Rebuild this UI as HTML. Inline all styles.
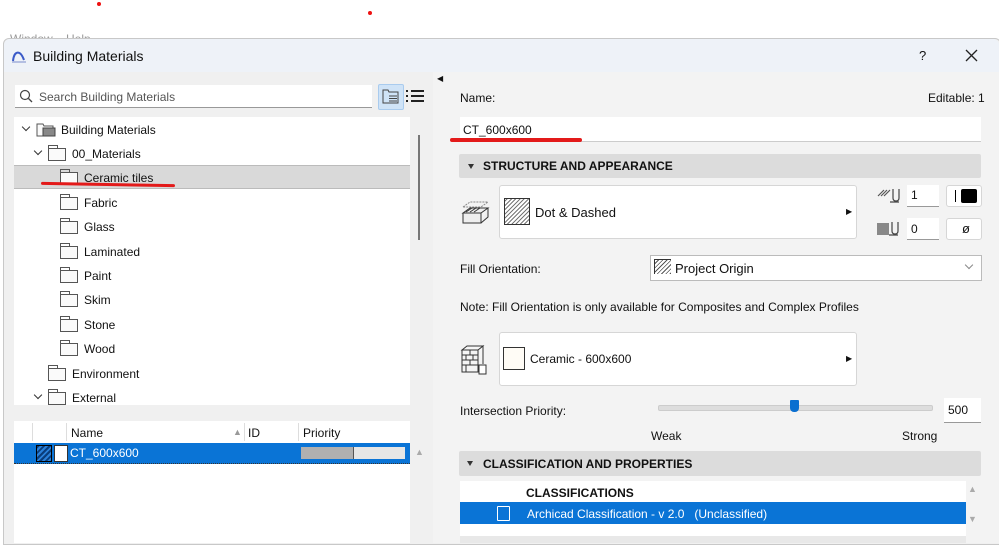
<!DOCTYPE html>
<html><head><style>
body{margin:0;width:999px;height:543px;overflow:hidden;background:#fff;font-family:"Liberation Sans",sans-serif;font-size:12px;color:#111;position:relative}
.a{position:absolute}
.fold{position:absolute;width:18px;height:13px;border:1px solid #555;background:#fafafa;box-sizing:border-box}
.fold:before{content:"";position:absolute;left:-1px;top:-4px;width:8px;height:3px;border:1px solid #555;border-bottom:none}
.t{position:absolute;font-size:12px}
.chev{position:absolute;width:5px;height:5px;border-right:1.3px solid #333;border-bottom:1.3px solid #333;transform:rotate(45deg)}
.btn{position:absolute;background:#fff;border:1px solid #d6d6d6;border-radius:3px}
.hdr{position:absolute;background:#dcdcdc;border-radius:2px;font-weight:bold;font-size:12px}
.tri{position:absolute;width:0;height:0;border-left:3.5px solid transparent;border-right:3.5px solid transparent;border-top:5px solid #333}
</style></head><body>
<div class="a" style="left:97px;top:2px;width:4px;height:4px;border-radius:2px;background:#e11"></div>
<div class="a" style="left:368px;top:11px;width:4px;height:4px;border-radius:2px;background:#e11"></div>
<div class="a" style="left:10px;top:32px;color:#999;font-size:12px">Window&nbsp;&nbsp;&nbsp;&nbsp;Help</div>
<div class="a" style="left:3px;top:38px;width:996px;height:505px;background:#f0f0f0;border:1px solid #c8c8c8;border-radius:6px 6px 0 0"></div>
<div class="a" style="left:4px;top:39px;width:995px;height:33px;background:#eef2f8;border-radius:6px 6px 0 0"></div>
<svg class="a" style="left:11px;top:47px" width="16" height="16"><path d="M2 14 C3 4 9 2 13 13" stroke="#3b5bc8" stroke-width="2" fill="none"/><path d="M1 15 H15" stroke="#7a8ccc"/></svg>
<div class="a" style="left:33px;top:48px;font-size:14px">Building Materials</div>
<div class="a" style="left:919px;top:48px;font-size:13px">?</div>
<svg class="a" style="left:965px;top:49px" width="13" height="13"><path d="M1 1L12 12M12 1L1 12" stroke="#222" stroke-width="1.3"/></svg>
<div class="a" style="left:433px;top:72px;width:566px;height:471px;background:#f3f3f3"></div>
<div class="a" style="left:437px;top:74px;font-size:8px">◀</div>
<div class="a" style="left:15px;top:85px;width:357px;height:22px;background:#fff;border-bottom:1px solid #999"></div>
<svg class="a" style="left:19px;top:89px" width="14" height="14"><circle cx="6" cy="6" r="4.5" stroke="#444" fill="none" stroke-width="1.2"/><path d="M9.5 9.5 L13 13" stroke="#444" stroke-width="1.3"/></svg>
<div class="a" style="left:39px;top:90px;color:#555">Search Building Materials</div>
<div class="a" style="left:378px;top:84px;width:24px;height:24px;background:#cfe3f7;border:1px solid #a9cbee;border-radius:2px"></div>
<svg class="a" style="left:382px;top:88px" width="18" height="16"><path d="M1 2h5l1 2h9v11H1z" fill="none" stroke="#444"/><path d="M7 8h8M7 10.5h8M7 13h8" stroke="#444"/></svg>
<svg class="a" style="left:405px;top:89px" width="20" height="14"><path d="M1 2h2M1 7h2M1 12h2M6 2h13M6 7h13M6 12h13" stroke="#222" stroke-width="2"/></svg>
<div class="a" style="left:14px;top:117px;width:396px;height:288px;background:#fff"></div>
<div class="a" style="left:418px;top:135px;width:2px;height:105px;background:#777"></div>
<div class="a" style="left:14px;top:165px;width:396px;height:24px;background:#d9d9d9;border-top:1px solid #bbb;border-bottom:1px solid #bbb;box-sizing:border-box"></div>
<div class="chev" style="left:23px;top:124px"></div>
<svg class="a" style="left:36px;top:121px" width="22" height="16"><path d="M1 3h6l1 2h9v10H1z" fill="#fafafa" stroke="#555"/><rect x="7" y="7" width="12" height="8" fill="#888" stroke="#444"/></svg>
<div class="t" style="left:61px;top:123px">Building Materials</div>
<div class="chev" style="left:35px;top:148px"></div>
<div class="fold" style="left:48px;top:148px"></div><div class="t" style="left:72px;top:147px">00_Materials</div>
<div class="fold" style="left:60px;top:172px"></div><div class="t" style="left:84px;top:171px">Ceramic tiles</div>
<div class="a" style="left:41px;top:183px;width:134px;height:3px;background:#e31a1a;border-radius:2px;transform:rotate(1deg)"></div>
<div class="fold" style="left:60px;top:197px"></div><div class="t" style="left:84px;top:196px">Fabric</div>
<div class="fold" style="left:60px;top:221px"></div><div class="t" style="left:84px;top:220px">Glass</div>
<div class="fold" style="left:60px;top:246px"></div><div class="t" style="left:84px;top:245px">Laminated</div>
<div class="fold" style="left:60px;top:270px"></div><div class="t" style="left:84px;top:269px">Paint</div>
<div class="fold" style="left:60px;top:294px"></div><div class="t" style="left:84px;top:293px">Skim</div>
<div class="fold" style="left:60px;top:319px"></div><div class="t" style="left:84px;top:318px">Stone</div>
<div class="fold" style="left:60px;top:343px"></div><div class="t" style="left:84px;top:342px">Wood</div>
<div class="fold" style="left:48px;top:368px"></div><div class="t" style="left:72px;top:367px">Environment</div>
<div class="chev" style="left:35px;top:392px"></div>
<div class="fold" style="left:48px;top:392px"></div><div class="t" style="left:72px;top:391px">External</div>
<div class="a" style="left:14px;top:421px;width:396px;height:122px;background:#fff"></div>
<div class="a" style="left:32px;top:423px;width:1px;height:18px;background:#ddd"></div>
<div class="a" style="left:66px;top:423px;width:1px;height:18px;background:#ddd"></div>
<div class="a" style="left:244px;top:423px;width:1px;height:18px;background:#ddd"></div>
<div class="a" style="left:298px;top:423px;width:1px;height:18px;background:#ddd"></div>
<div class="t" style="left:71px;top:426px">Name</div>
<div class="a" style="left:233px;top:427px;font-size:9px;color:#999">▲</div>
<div class="t" style="left:248px;top:426px">ID</div>
<div class="t" style="left:303px;top:426px">Priority</div>
<div class="a" style="left:14px;top:443px;width:396px;height:20px;background:#0a74d6;border-bottom:1px dotted #333"></div>
<div class="a" style="left:36px;top:445px;width:14px;height:15px;background:repeating-linear-gradient(135deg,#0a3d7a 0 2px,#2a80d8 2px 4px);border:1px solid #000"></div>
<div class="a" style="left:54px;top:445px;width:12px;height:15px;background:#fff;border:1px solid #333"></div>
<div class="t" style="left:70px;top:446px;color:#fff">CT_600x600</div>
<div class="a" style="left:301px;top:447px;width:52px;height:12px;background:#b0b0b0;border-right:1px solid #555"></div>
<div class="a" style="left:354px;top:447px;width:51px;height:12px;background:#e6e6e6"></div>
<div class="a" style="left:415px;top:447px;font-size:9px;color:#aaa">▲</div>
<div class="t" style="left:460px;top:91px">Name:</div>
<div class="t" style="left:928px;top:91px">Editable: 1</div>
<div class="a" style="left:460px;top:117px;width:521px;height:24px;background:#fff;border-bottom:1px solid #ccc"></div>
<div class="t" style="left:463px;top:123px">CT_600x600</div>
<div class="a" style="left:450px;top:138px;width:132px;height:4px;background:#e31a1a;border-radius:2px"></div>
<div class="hdr" style="left:459px;top:154px;width:522px;height:24px"><div class="tri" style="left:9px;top:10px"></div><span style="position:absolute;left:24px;top:5px">STRUCTURE AND APPEARANCE</span></div>
<svg class="a" style="left:460px;top:199px" width="30" height="28"><path d="M3 8 L10 3 H28 L21 8 Z" fill="none" stroke="#888" stroke-dasharray="2 1"/><path d="M3 14 L10 9 H28 L21 14 Z M3 14 V24 H21 V14 M21 24 L28 18 V9" fill="#eee" stroke="#333"/><path d="M6 13 L12 9 M10 13 L16 9 M14 13 L20 9" stroke="#333"/></svg>
<div class="btn" style="left:499px;top:185px;width:356px;height:52px"></div>
<div class="a" style="left:504px;top:198px;width:24px;height:25px;border:1px solid #333;background:repeating-linear-gradient(135deg,#fff 0 1px,#777 1px 2px,#fff 2px 3px)"></div>
<div class="t" style="left:535px;top:205px;font-size:13px">Dot &amp; Dashed</div>
<div class="a" style="left:846px;top:207px;font-size:8px">▶</div>
<svg class="a" style="left:877px;top:186px" width="28" height="18"><path d="M1 10L7 4M4 10L10 4M7 10L13 4" stroke="#555" stroke-width="1.2"/><path d="M16 3V12Q16 15 19 15Q22 15 22 12V3M13 16H22" stroke="#444" fill="none" stroke-width="1.2"/></svg>
<div class="a" style="left:907px;top:185px;width:32px;height:21px;background:#fff;border-bottom:1px solid #999"></div><div class="t" style="left:911px;top:188px">1</div>
<div class="btn" style="left:946px;top:185px;width:34px;height:20px"><div class="a" style="left:8px;top:4px;width:1px;height:12px;background:#000"></div><div class="a" style="left:14px;top:3px;width:16px;height:14px;background:#000;border-radius:2px"></div></div>
<div class="a" style="left:877px;top:223px;width:12px;height:12px;background:#888"></div>
<svg class="a" style="left:889px;top:219px" width="16" height="18"><path d="M3 3V12Q3 15 6 15Q9 15 9 12V3M0 16H9" stroke="#444" fill="none" stroke-width="1.2"/></svg>
<div class="a" style="left:907px;top:218px;width:32px;height:21px;background:#fff;border-bottom:1px solid #999"></div><div class="t" style="left:911px;top:222px">0</div>
<div class="btn" style="left:946px;top:218px;width:34px;height:20px"><span style="position:absolute;left:15px;top:2px;font-size:13px">ø</span></div>
<div class="t" style="left:460px;top:262px">Fill Orientation:</div>
<div class="a" style="left:650px;top:255px;width:330px;height:24px;background:#fff;border:1px solid #bbb"></div>
<div class="a" style="left:654px;top:259px;width:16px;height:14px;background:repeating-linear-gradient(135deg,#fff 0 2px,#555 2px 3px);border-left:1px solid #333;border-top:1px solid #333"></div>
<div class="t" style="left:675px;top:261px;font-size:13px">Project Origin</div>
<div class="chev" style="left:966px;top:262px;border-color:#888"></div>
<div class="t" style="left:460px;top:300px">Note: Fill Orientation is only available for Composites and Complex Profiles</div>
<svg class="a" style="left:460px;top:344px" width="30" height="32"><path d="M2 6 L7 2 H23 L18 6 Z M2 6 H18 V28 H2 Z M18 6 L23 2 V20 M2 11 H18 M2 16 H18 M2 21 H18 M10 6 V11 M6 11 V16 M13 11 V16 M10 16 V21 M6 21 V28" fill="#f5f5f5" stroke="#333"/><rect x="19" y="21" width="7" height="9" fill="#fff" stroke="#333"/></svg>
<div class="btn" style="left:499px;top:332px;width:356px;height:52px"></div>
<div class="a" style="left:503px;top:347px;width:20px;height:21px;border:1px solid #333;background:#fffcf6"></div>
<div class="t" style="left:530px;top:352px">Ceramic - 600x600</div>
<div class="a" style="left:846px;top:354px;font-size:8px">▶</div>
<div class="t" style="left:460px;top:404px">Intersection Priority:</div>
<div class="a" style="left:658px;top:405px;width:273px;height:4px;background:#ddd;border:1px solid #ccc;border-radius:2px"></div>
<div class="a" style="left:790px;top:400px;width:9px;height:12px;background:#0a6fd0;border-radius:1px 1px 4px 4px"></div>
<div class="a" style="left:944px;top:398px;width:37px;height:24px;background:#fff;border-bottom:1px solid #999"></div>
<div class="t" style="left:948px;top:403px">500</div>
<div class="t" style="left:651px;top:429px">Weak</div>
<div class="t" style="left:902px;top:429px">Strong</div>
<div class="hdr" style="left:459px;top:451px;width:522px;height:25px"><div class="tri" style="left:8px;top:10px"></div><span style="position:absolute;left:24px;top:6px">CLASSIFICATION AND PROPERTIES</span></div>
<div class="a" style="left:460px;top:481px;width:506px;height:62px;background:#fff"></div>
<div class="t" style="left:526px;top:486px;font-weight:bold">CLASSIFICATIONS</div>
<div class="a" style="left:460px;top:502px;width:506px;height:22px;background:#0a74d6"></div>
<div class="a" style="left:497px;top:506px;width:11px;height:13px;border:1px solid #fff;border-radius:1px"></div>
<div class="t" style="left:527px;top:507px;color:#fff">Archicad Classification - v 2.0&nbsp;&nbsp;&nbsp;(Unclassified)</div>
<div class="a" style="left:968px;top:484px;font-size:9px;color:#aaa">▲</div>
<div class="a" style="left:968px;top:514px;font-size:9px;color:#aaa">▼</div>
<div class="a" style="left:460px;top:536px;width:506px;height:7px;background:#e8e8e8"></div>
</body></html>
